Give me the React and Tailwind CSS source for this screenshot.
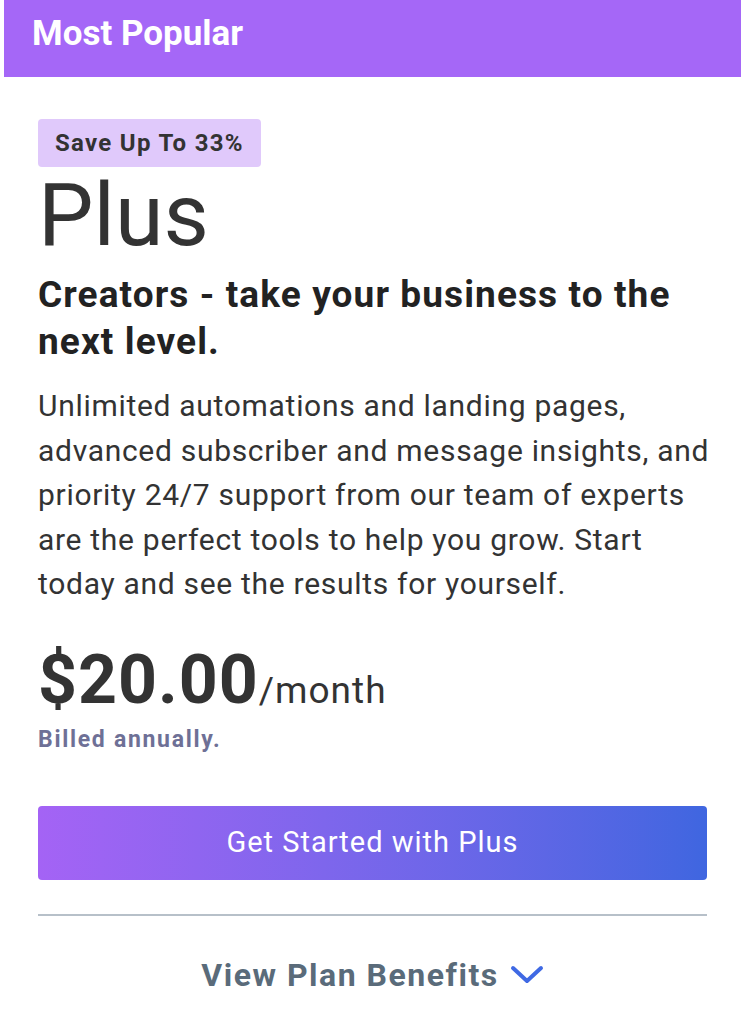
import React from "react";

function Chevron() {
	return (
		<svg width="34" height="20" viewBox="0 0 34 20" fill="none" className="ml-[11px]">
			<path d="M3 3 L17 16 L31 3" stroke="#3f69e4" strokeWidth="4" strokeLinecap="round" strokeLinejoin="round" />
		</svg>
	);
}

function App() {
	return (
		<div
			className="min-h-screen bg-white"
			style={{ fontFamily: "Roboto, 'Noto Sans', sans-serif" }}
		>
			<div className="ml-[4px] w-[737px]">
				<div className="h-[77px] bg-[#a567f7] flex items-center px-[28px] pb-[9px]">
					<span className="text-white font-bold text-[35px]">Most Popular</span>
				</div>

				<div className="px-[34px] pt-[42px] text-[#333333]">
					<div className="inline-flex h-[48px] items-center rounded-[4px] bg-[#e0c9fb] px-[17px]">
						<span className="text-[24px] font-bold tracking-[1.3px] text-[#333333]">Save Up To 33%</span>
					</div>

					<h2 className="mt-[4px] text-[88px] leading-none font-normal text-[#333333]">Plus</h2>

					<h3 className="mt-[12px] text-[37px] leading-[47px] font-bold tracking-[1.1px] text-[#222222]">
						Creators - take your business to the next level.
					</h3>

					<p className="mt-[19px] w-[700px] text-[30px] leading-[44.5px] tracking-[0.7px] text-[#333333]">
						Unlimited automations and landing pages,
						<br />
						advanced subscriber and message insights, and
						<br />
						priority 24/7 support from our team of experts
						<br />
						are the perfect tools to help you grow. Start
						<br />
						today and see the results for yourself.
					</p>

					<div className="mt-[39px] flex items-baseline">
						<span className="text-[68px] leading-none font-bold tracking-[1px] text-[#333333]">$20.00</span>
						<span className="text-[37px] leading-none tracking-[1px] text-[#333333]">/month</span>
					</div>
					<div className="mt-[9px] text-[23px] font-bold tracking-[1.7px] text-[#6e7096]">Billed annually.</div>

					<button className="mt-[49px] flex h-[74px] w-full items-center justify-center rounded-[4px] bg-linear-to-r from-[#a463f5] to-[#3f66e0] text-[29px] text-white tracking-[1px]">
						Get Started with Plus
					</button>

					<div className="mt-[34px] h-[2px] bg-[#b7c0c9]" />

					<div className="mt-[35px] flex items-center justify-center">
						<span className="text-[32px] font-bold tracking-[1.5px] text-[#5a6b7a]">View Plan Benefits</span>
						<Chevron />
					</div>
				</div>
			</div>
		</div>
	);
}

export default App;
